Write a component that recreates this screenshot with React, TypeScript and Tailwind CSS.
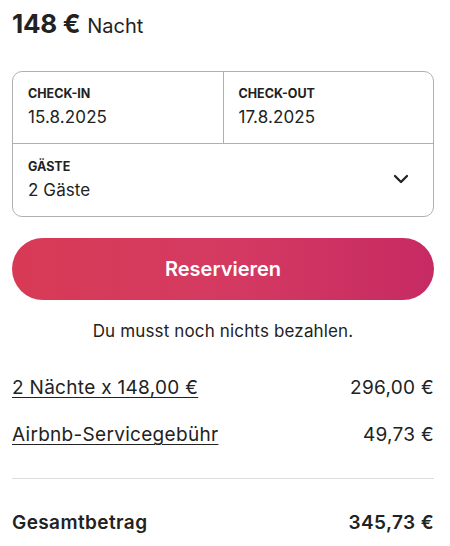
import React from 'react';
import { ChevronDown } from 'lucide-react';

export default function App() {
  return (
    <div className="w-[450px] h-[546px] overflow-hidden bg-white pl-3 pr-4 text-[#222222]" style={{ fontFamily: 'Inter, "Noto Sans", sans-serif' }}>
      <div className="pt-[4px] flex items-baseline gap-[7px] h-[36px]">
        <span className="text-[26px] font-bold tracking-[-0.3px]">148 €</span>
        <span className="text-[20px]">Nacht</span>
      </div>

      <div className="mt-[35px] border border-[#b0b0b0] rounded-[10px]">
        <div className="flex border-b border-[#b0b0b0]">
          <div className="flex-1 border-r border-[#b0b0b0] h-[71px] px-[15px] pt-[14px]">
            <div className="text-[12.5px] font-bold uppercase leading-[16px]">Check-In</div>
            <div className="text-[17px] leading-[24px] mt-[3px] tracking-[0.1px]">15.8.2025</div>
          </div>
          <div className="flex-1 h-[71px] px-[15px] pt-[14px]">
            <div className="text-[12.5px] font-bold uppercase leading-[16px]">Check-Out</div>
            <div className="text-[17px] leading-[24px] mt-[3px] tracking-[0.1px]">17.8.2025</div>
          </div>
        </div>
        <div className="flex items-center justify-between h-[72px] px-[15px]">
          <div className="pt-[1px]">
            <div className="text-[12.5px] font-bold uppercase leading-[16px]">Gäste</div>
            <div className="text-[17px] leading-[24px] mt-[3px] tracking-[0.1px]">2 Gäste</div>
          </div>
          <ChevronDown size={24} strokeWidth={2.3} className="mr-[5px] mt-[-2px]" />
        </div>
      </div>

      <button className="mt-[21px] w-full h-[62px] rounded-full text-white text-[20px] font-semibold bg-gradient-to-r from-[#d83a55] via-[#d43a61] to-[#c62a63]">
        Reservieren
      </button>

      <p className="mt-[19px] text-center text-[17px] leading-[24px] tracking-[0.15px]">Du musst noch nichts bezahlen.</p>

      <div className="mt-[33px] flex flex-col gap-[23px] text-[19px] leading-[24px] tracking-[0.3px]">
        <div className="flex justify-between">
          <span className="underline underline-offset-[3px] decoration-1">2 Nächte x 148,00 €</span>
          <span>296,00 €</span>
        </div>
        <div className="flex justify-between">
          <span className="underline underline-offset-[3px] decoration-1">Airbnb-Servicegebühr</span>
          <span>49,73 €</span>
        </div>
      </div>

      <div className="mt-[31px] border-t border-[#dddddd]" />

      <div className="mt-[32px] flex justify-between text-[19px] leading-[24px] font-semibold tracking-[0.4px]">
        <span>Gesamtbetrag</span>
        <span>345,73 €</span>
      </div>
    </div>
  );
}
